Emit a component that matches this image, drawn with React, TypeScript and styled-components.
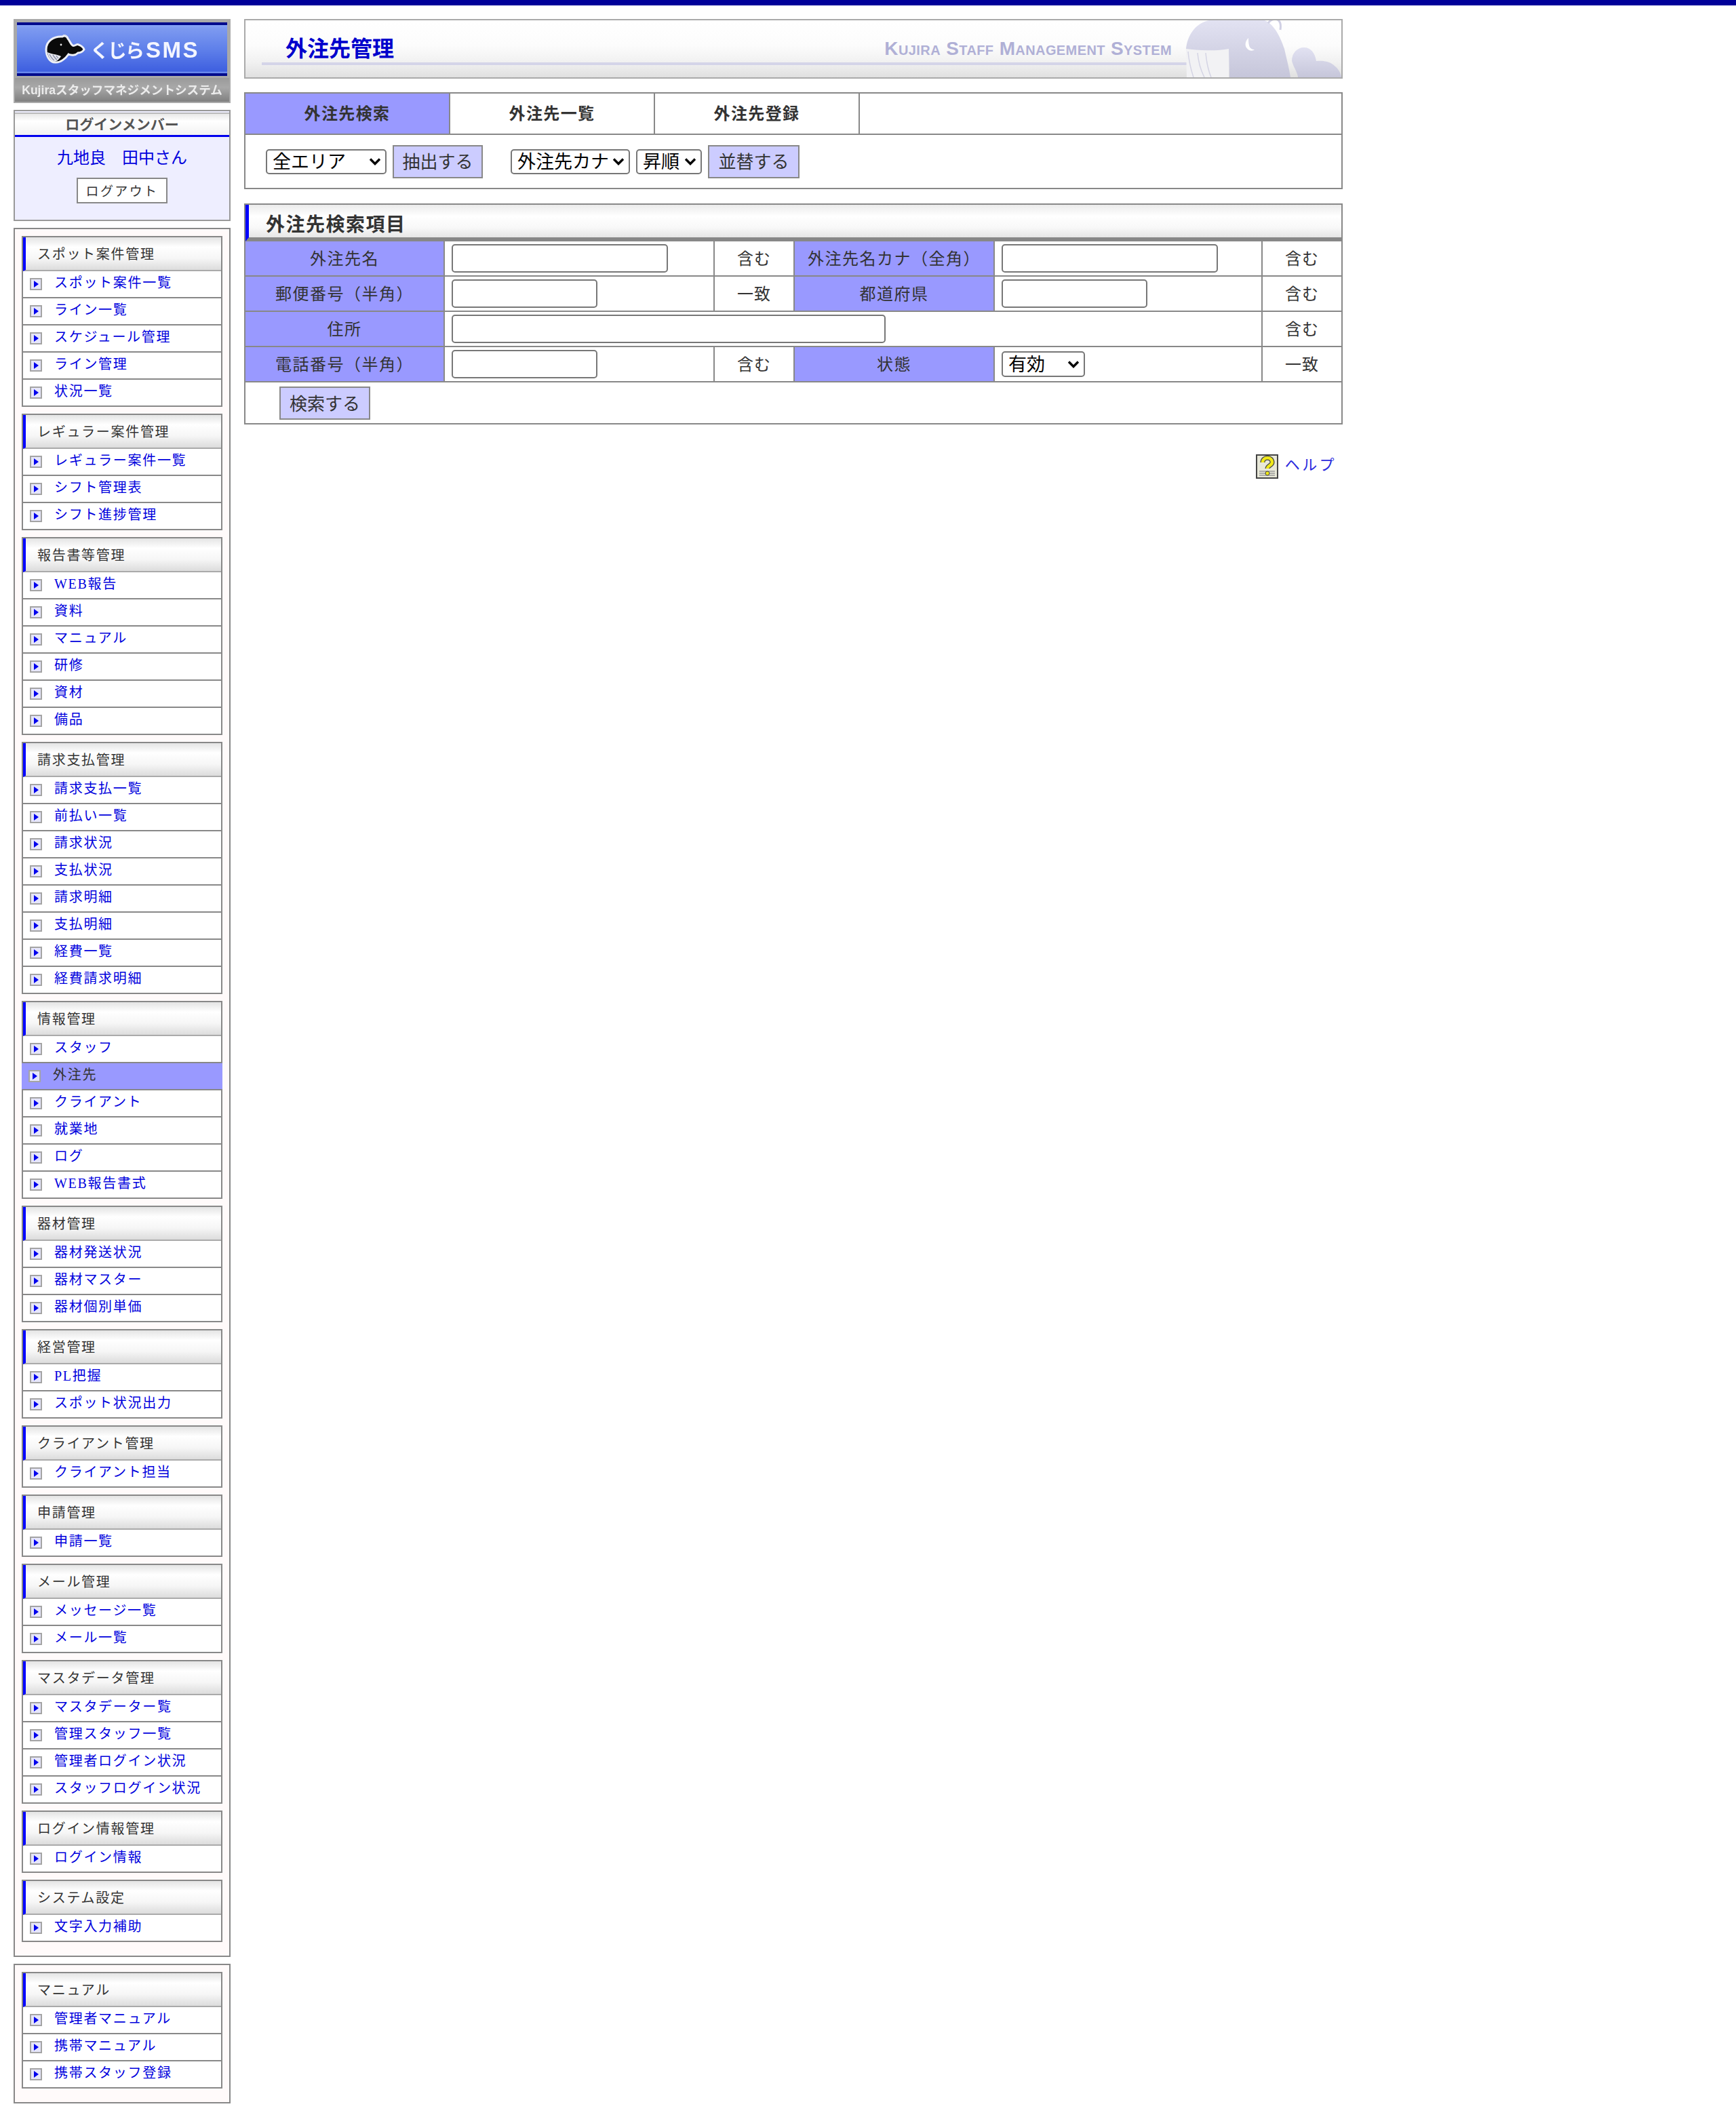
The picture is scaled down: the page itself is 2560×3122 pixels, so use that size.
import React from "react";
import styled, { createGlobalStyle } from "styled-components";

const serif = `"Liberation Serif", "Noto Sans CJK JP", serif`;
const sans = `"Liberation Sans", "Noto Sans CJK JP", sans-serif`;
const chevron = `url("data:image/svg+xml,%3Csvg xmlns='http://www.w3.org/2000/svg' width='18' height='12' viewBox='0 0 18 12'%3E%3Cpath d='M2 2.5l7 7 7-7' fill='none' stroke='%23000' stroke-width='3.4'/%3E%3C/svg%3E")`;

const Global = createGlobalStyle`
  html, body { margin: 0; padding: 0; background: #fff; }
  body { font-family: ${serif}; color: #333; }
  * { box-sizing: border-box; }
`;

const TopBar = styled.div`height: 8px; background: #000099;`;
const Page = styled.div`display: flex; gap: 20px; padding: 20px 0 20px 20px; align-items: flex-start;`;
const Side = styled.aside`width: 320px; flex: none; display: flex; flex-direction: column; gap: 10px;`;
const Main = styled.main`width: 1620px; flex: none; display: flex; flex-direction: column;`;

/* logo */
const Logo = styled.div`height: 124px; border: 2px solid #aaa; background: #a9a9a9; display: flex; flex-direction: column; padding: 3px 3px 0;`;
const LogoTop = styled.div`
  height: 79px; flex: none;
  border-top: 4px solid #000a8c; border-bottom: 4px solid #000a8c;
  background: linear-gradient(#86a3f5 0, #7c99f0 8%, #5f80ea 50%, #3f60e0 95%, #7a98f0 100%);
  display: flex; align-items: center; justify-content: center; gap: 7px;
`;
const LogoName = styled.span`
  font: bold 28px ${sans}; color: #f4f6ff; letter-spacing: -2px; filter: blur(0.4px); white-space: nowrap;
  span { letter-spacing: 2.5px; font-size: 33px; margin-left: 4px; }
`;
const LogoSub = styled.div`
  flex: 1; margin: 3px -3px 0; padding-bottom: 2px; background: linear-gradient(#9a9a9a, #a8a8a8 40%, #808080);
  display: flex; align-items: center; justify-content: center;
  font: bold 17.6px ${sans}; color: #ececec; white-space: nowrap; filter: blur(0.3px);
`;

/* login */
const LoginBox = styled.section`height: 164px; border: 2px solid #999; background: #eeeeff; display: flex; flex-direction: column; align-items: center;`;
const LoginHead = styled.h2`
  margin: 2px 0 0; width: 100%; height: 36px; flex: none; border-top: 2px solid #bbb; border-bottom: 3px solid #0000ee;
  background: linear-gradient(#e8e8e8, #fff 35%, #f2f2f2);
  font: bold 21px ${sans}; color: #555; text-align: center; line-height: 31px; letter-spacing: 0;
`;
const LoginName = styled.div`margin-top: 16px; font-size: 24px; line-height: 30px; color: #0000dd;`;
const Logout = styled.a`
  margin-top: 14px; width: 134px; height: 38px; border: 2px solid #888; background: #fff; padding-bottom: 2px;
  display: flex; align-items: center; justify-content: center;
  font-size: 19px; letter-spacing: 2.4px; color: #333;
`;

/* menu */
const MenuBox = styled.nav`border: 2px solid #888; background: #fffafa; padding: 10px;`;
const MenuSection = styled.div`border: 2px solid #888; margin-bottom: 10px; background: #fff;`;
const MenuHead = styled.h3`
  margin: 0; height: 50px; border-left: 4px solid #0000ff; border-bottom: 2px solid #aaa;
  background: linear-gradient(#e4e4e4, #fff 30%, #f6f6f6 65%, #dcdcdc);
  display: flex; align-items: center; padding: 0 0 2px 17px;
  font-size: 20px; font-weight: normal; letter-spacing: 1.7px; color: #333; white-space: nowrap;
`;
const MenuRow = styled.a<{ $active?: boolean }>`
  height: 40px; display: flex; align-items: center; gap: 18px;
  padding: 0 0 2px 10px;
  margin: 0 ${p => (p.$active ? "-2px" : "0")};
  background: ${p => (p.$active ? "#9999ff" : "#fff")};
  box-shadow: inset 0 -2px 0 #888;
  color: ${p => (p.$active ? "#333" : "#0000dd")};
  font-size: 20px; letter-spacing: 1.7px; white-space: nowrap;
  &:last-child { height: 38px; box-shadow: none; padding-bottom: 0; }
`;
const MenuText = styled.span`margin-bottom: 8px;`;
const ArrowSvg = styled.svg`width: 18px; height: 18px; flex: none;`;

/* banner */
const Banner = styled.header`
  position: relative; height: 88px; border: 2px solid #aaa; overflow: hidden;
  background: linear-gradient(#fff 0, #fcfcfc 45%, #f0f0f0 75%, #e0e0e0 100%);
`;
const BannerRow = styled.div`
  margin-left: 24px; width: 1364px; height: 66px; padding: 0 22px 0 35px; border-bottom: 4px solid #d4d4e8;
  display: flex; justify-content: space-between; align-items: flex-end;
`;
const Title = styled.h1`margin: 0; font-size: 32px; font-weight: bold; color: #0000cc; line-height: 40px;`;
const BannerSub = styled.span`
  font: bold 28px/40px ${sans}; font-variant: small-caps; color: #b0b0d6; letter-spacing: 0.4px; white-space: nowrap;
`;
const BannerWhale = styled.svg`position: absolute; right: 0; top: 0; width: 234px; height: 84px;`;

/* tabs & filter */
const Panel = styled.section`margin-top: 20px; border: 2px solid #888;`;
const Tabs = styled.div`display: flex; height: 61px; border-bottom: 2px solid #888;`;
const Tab = styled.a<{ $active?: boolean }>`
  width: 302px; flex: none; border-right: 2px solid #888; padding-bottom: 4px;
  background: ${p => (p.$active ? "#9999ff" : "#fff")};
  display: flex; align-items: center; justify-content: center;
  font-size: 24px; font-weight: bold; letter-spacing: 1.4px; color: #333;
`;
const Filter = styled.div`height: 78px; display: flex; align-items: center; padding-left: 30px; gap: 9px;`;
const Select = styled.select<{ $w: number; $h?: number; $left?: number }>`
  appearance: none;
  width: ${p => p.$w}px; height: ${p => p.$h ?? 37}px; margin: 0 0 0 ${p => p.$left ?? 0}px;
  border: 2px solid #777; border-radius: 5px; background: #fff ${chevron} no-repeat right 6px center;
  font: 27px/30px "Noto Sans CJK JP", sans-serif; color: #000; padding: 0 0 3px 8px;
`;
const Action = styled.button<{ $w: number }>`
  width: ${p => p.$w}px; height: 49px; margin: 0; padding: 0 0 3px;
  border: 2px solid #888; background: #ccccff; border-radius: 0;
  font: 26px "Noto Sans CJK JP", sans-serif; color: #333;
`;

/* search form */
const SearchPanel = styled.section`margin-top: 21px; border: 2px solid #888;`;
const SearchHead = styled.h2`
  margin: 0; height: 54px; border-left: 5px solid #0000ff; border-bottom: 6px solid #888;
  background: linear-gradient(#ebebeb, #fff 35%, #f8f8f8 70%, #e6e6e6);
  padding: 5px 0 0 25px; display: flex; align-items: center;
  font-size: 28px; font-weight: bold; letter-spacing: 1.5px; color: #333;
`;
const Grid = styled.div`display: grid; grid-template-columns: 294px 398px 118px 295px 395px 116px; grid-auto-rows: 52px;`;
const Cell = styled.div<{ $span?: number; $last?: boolean }>`
  grid-column: span ${p => p.$span ?? 1};
  border-bottom: 2px solid #888; border-right: ${p => (p.$last ? "0" : "2px solid #888")};
  display: flex; align-items: center; background: #fff; padding: 0;
`;
const LabelCell = styled(Cell)`background: #9999ff; justify-content: center; padding-bottom: 4px; font-size: 24px; letter-spacing: 1.5px; color: #333; white-space: nowrap;`;
const MatchCell = styled(Cell)`justify-content: center; padding-bottom: 4px; font-size: 24px; letter-spacing: 1px; color: #333;`;
const FieldCell = styled(Cell)`padding-left: 10px;`;
const TextInput = styled.input<{ $w: number }>`
  width: ${p => p.$w}px; height: 42px; margin: 0; border: 2px solid #777; border-radius: 5px; background: #fff; padding: 0 6px; font-size: 24px;
`;
const SearchFoot = styled.div`height: 60px; padding: 6px 0 0 50px;`;

/* help */
const Help = styled.a`
  margin-top: 44px; padding-right: 9px; display: flex; justify-content: flex-end; align-items: flex-start; gap: 10px;
  font-size: 22px; letter-spacing: 3.4px; color: #2a2add; line-height: 32px;
`;
const HelpIcon = styled.svg`width: 33px; height: 36px; flex: none;`;

const Arrow = () => (
  <ArrowSvg viewBox="0 0 18 18">
    <rect x="1" y="1" width="16" height="16" fill="#e6e6fa" stroke="#a4a4a4" strokeWidth="2" />
    <path d="M6 4l7 5-7 5z" fill="#0000ee" />
  </ArrowSvg>
);

const Menu = ({ title, items, active }: { title: string; items: string[]; active?: string }) => (
  <MenuSection>
    <MenuHead>{title}</MenuHead>
    {items.map(i => (
      <MenuRow key={i} $active={i === active}>
        <Arrow />
        <MenuText>{i}</MenuText>
      </MenuRow>
    ))}
  </MenuSection>
);

const menus: [string, string[]][] = [
  ["スポット案件管理", ["スポット案件一覧", "ライン一覧", "スケジュール管理", "ライン管理", "状況一覧"]],
  ["レギュラー案件管理", ["レギュラー案件一覧", "シフト管理表", "シフト進捗管理"]],
  ["報告書等管理", ["WEB報告", "資料", "マニュアル", "研修", "資材", "備品"]],
  ["請求支払管理", ["請求支払一覧", "前払い一覧", "請求状況", "支払状況", "請求明細", "支払明細", "経費一覧", "経費請求明細"]],
  ["情報管理", ["スタッフ", "外注先", "クライアント", "就業地", "ログ", "WEB報告書式"]],
  ["器材管理", ["器材発送状況", "器材マスター", "器材個別単価"]],
  ["経営管理", ["PL把握", "スポット状況出力"]],
  ["クライアント管理", ["クライアント担当"]],
  ["申請管理", ["申請一覧"]],
  ["メール管理", ["メッセージ一覧", "メール一覧"]],
  ["マスタデータ管理", ["マスタデーター覧", "管理スタッフ一覧", "管理者ログイン状況", "スタッフログイン状況"]],
  ["ログイン情報管理", ["ログイン情報"]],
  ["システム設定", ["文字入力補助"]],
];

export default function App() {
  return (
    <>
      <Global />
      <TopBar />
      <Page>
        <Side>
          <Logo>
            <LogoTop>
              <svg width="60" height="44" viewBox="0 0 60 44">
                <path d="M2 22C2 9 14 2 26 3c3-2 7-1 8 3 3 3 4 8 7 10 3 2 6-3 9-1 3 1 7 4 8 7-2 3-6 5-9 5-4 4-10 4-14 2-4 6-12 13-20 12C8 41 2 33 2 22z" fill="#0a0a0a" stroke="#eef0f6" strokeWidth="3" />
                <path d="M4 26c6 3 14 3 20 6-3 5-7 8-10 8-5-1-9-7-10-14z" fill="#e8e8ee" />
                <path d="M7 29c2 4 4 7 7 9M12 30c2 3 4 6 6 7M17 31c1 2 2 3 3 4" fill="none" stroke="#8a8fa8" strokeWidth="1.4" />
                <path d="M27 1c2-1 5 0 6 2" fill="none" stroke="#d8dcec" strokeWidth="1.5" />
                <circle cx="24" cy="15" r="1.4" fill="#eee" />
              </svg>
              <LogoName>くじら<span>SMS</span></LogoName>
            </LogoTop>
            <LogoSub>Kujiraスタッフマネジメントシステム</LogoSub>
          </Logo>
          <LoginBox>
            <LoginHead>ログインメンバー</LoginHead>
            <LoginName>九地良　田中さん</LoginName>
            <Logout>ログアウト</Logout>
          </LoginBox>
          <MenuBox>
            {menus.map(([t, it]) => (
              <Menu key={t} title={t} items={it} active="外注先" />
            ))}
          </MenuBox>
          <MenuBox>
            <Menu title="マニュアル" items={["管理者マニュアル", "携帯マニュアル", "携帯スタッフ登録"]} />
          </MenuBox>
        </Side>
        <Main>
          <Banner>
            <BannerRow>
              <Title>外注先管理</Title>
              <BannerSub>Kujira Staff Management System</BannerSub>
            </BannerRow>
            <BannerWhale viewBox="1744 30 234 84">
              <defs>
                <linearGradient id="wh" x1="0" y1="0" x2="0" y2="1">
                  <stop offset="0" stopColor="#e2e2f2" />
                  <stop offset="1" stopColor="#c6c6da" />
                </linearGradient>
              </defs>
              <path d="M1749 72c2-20 14-38 34-42h82c14 6 23 24 29 42 3 14 7 28 9 42h-90l-1-38c-20 4-44 2-63 0z" fill="url(#wh)" />
              <path d="M1749 72c18 2 43 4 63 0v42h-62z" fill="#f2f2f4" />
              <path d="M1752 76c1 12 4 26 8 38M1766 78c1 12 5 26 10 36M1778 78c1 12 4 26 8 36" fill="none" stroke="#d4d4e4" strokeWidth="1.5" />
              <path d="M1870 34c4-5 8-7 14-5 5 3 5 9 4 15" fill="none" stroke="#d0d0e4" strokeWidth="3" />
              <path d="M1841 56c-6 6-6 14 1 18 3 1 6 1 8-1-4 0-7-2-8-6-1-4-1-8-1-11z" fill="#fff" />
              <path d="M1905 90c0-12 8-20 18-20s16 8 18 20c10-1 20 0 28 8 5 4 8 10 9 16h-64c0-6-6-14-9-24z" fill="url(#wh)" />
            </BannerWhale>
          </Banner>
          <Panel>
            <Tabs>
              <Tab $active>外注先検索</Tab>
              <Tab>外注先一覧</Tab>
              <Tab>外注先登録</Tab>
            </Tabs>
            <Filter>
              <Select $w={178}><option>全エリア</option></Select>
              <Action $w={133}>抽出する</Action>
              <Select $w={176} $left={32}><option>外注先カナ</option></Select>
              <Select $w={97}><option>昇順</option></Select>
              <Action $w={135}>並替する</Action>
            </Filter>
          </Panel>
          <SearchPanel>
            <SearchHead>外注先検索項目</SearchHead>
            <Grid>
              <LabelCell>外注先名</LabelCell>
              <FieldCell><TextInput $w={319} /></FieldCell>
              <MatchCell>含む</MatchCell>
              <LabelCell>外注先名カナ（全角）</LabelCell>
              <FieldCell><TextInput $w={319} /></FieldCell>
              <MatchCell $last>含む</MatchCell>

              <LabelCell>郵便番号（半角）</LabelCell>
              <FieldCell><TextInput $w={215} /></FieldCell>
              <MatchCell>一致</MatchCell>
              <LabelCell>都道府県</LabelCell>
              <FieldCell><TextInput $w={215} /></FieldCell>
              <MatchCell $last>含む</MatchCell>

              <LabelCell>住所</LabelCell>
              <FieldCell $span={4}><TextInput $w={640} /></FieldCell>
              <MatchCell $last>含む</MatchCell>

              <LabelCell>電話番号（半角）</LabelCell>
              <FieldCell><TextInput $w={215} /></FieldCell>
              <MatchCell>含む</MatchCell>
              <LabelCell>状態</LabelCell>
              <FieldCell><Select $w={123} $h={38}><option>有効</option></Select></FieldCell>
              <MatchCell $last>一致</MatchCell>
            </Grid>
            <SearchFoot>
              <Action $w={134}>検索する</Action>
            </SearchFoot>
          </SearchPanel>
          <Help>
            <HelpIcon viewBox="0 0 33 36">
              <rect x="1" y="1" width="31" height="34" fill="#e8e8d8" stroke="#444" strokeWidth="2" />
              <path d="M5 25h23M5 28h23M5 31h23" stroke="#999" strokeWidth="1.5" />
              <path d="M10 12c0-9 14-9 14 0 0 4-7 5-7 9" fill="none" stroke="#444" strokeWidth="7" />
              <path d="M10 12c0-9 14-9 14 0 0 4-7 5-7 9" fill="none" stroke="#f0e818" strokeWidth="4.5" />
              <circle cx="17" cy="28" r="3" fill="#f0e818" stroke="#444" />
            </HelpIcon>
            ヘルプ
          </Help>
        </Main>
      </Page>
    </>
  );
}
